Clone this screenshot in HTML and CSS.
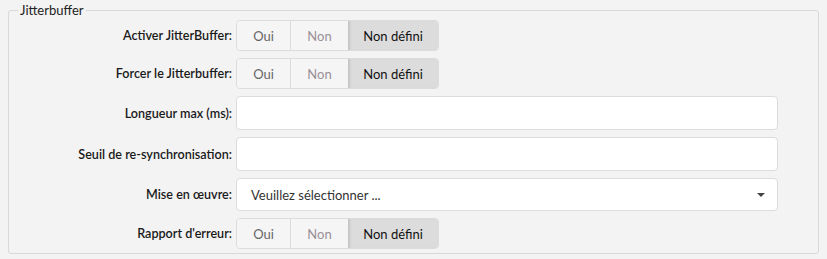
FILE: index.html
```html
<!DOCTYPE html>
<html lang="fr">
<head>
<meta charset="UTF-8" />
<title>Jitterbuffer</title>
<link rel="stylesheet" href="styles.css">
</head>
<body>
<fieldset class="group">
  <legend>Jitterbuffer</legend>

  <div class="form-grid">
    <label class="lbl">Activer JitterBuffer:</label>
    <div class="btn-group">
      <button class="opt opt-yes">Oui</button>
      <button class="opt opt-no">Non</button>
      <button class="opt opt-undef active">Non défini</button>
    </div>

    <label class="lbl">Forcer le Jitterbuffer:</label>
    <div class="btn-group">
      <button class="opt opt-yes">Oui</button>
      <button class="opt opt-no">Non</button>
      <button class="opt opt-undef active">Non défini</button>
    </div>

    <label class="lbl" for="maxlen">Longueur max (ms):</label>
    <input id="maxlen" class="field" type="text">

    <label class="lbl" for="resync">Seuil de re-synchronisation:</label>
    <input id="resync" class="field" type="text">

    <label class="lbl">Mise en œuvre:</label>
    <div class="field select">
      <span>Veuillez sélectionner ...</span>
      <span class="caret"></span>
    </div>

    <label class="lbl">Rapport d'erreur:</label>
    <div class="btn-group">
      <button class="opt opt-yes">Oui</button>
      <button class="opt opt-no">Non</button>
      <button class="opt opt-undef active">Non défini</button>
    </div>
  </div>
</fieldset>
</body>
</html>
```

FILE: styles.css
```css
body{margin:0;background:#f3f3f3;font-family:Lato,"Open Sans",sans-serif;font-size:13px;color:#222}
.group{margin:3px 0 0 8px;width:811px;box-sizing:border-box;border:1px solid #d8d8d8;border-radius:3px;padding:0 40px 4px 0}
.group legend{margin-left:9px;padding:0 2px 0 2px;font-size:13px;color:#222;line-height:14px}
.form-grid{display:grid;grid-template-columns:223px 1fr;column-gap:4px;row-gap:7px;align-items:center;margin-top:3px}
.lbl{text-align:right;font-weight:600;font-size:12.6px;color:#1a1a1a;white-space:nowrap}
.btn-group{display:flex;width:203px;height:31px;box-sizing:border-box;border:1px solid #dcdcdc;border-radius:4px;overflow:hidden;background:#f5f5f5}
.opt{font-family:inherit;font-size:13px;border:none;background:#f5f5f5;padding:0;cursor:pointer}
.opt-yes{width:54px;color:#666;border-right:1px solid #dcdcdc}
.opt-no{width:57px;color:#9a8f96}
.opt-undef{flex:1;color:#111}
.opt.active{background:#dcdcdc;box-shadow:inset 3px 0 2px -1px #c4c4c4}
.field{height:34px;box-sizing:border-box;border:1px solid #dcdcdc;border-radius:4px;background:#fff;font-family:inherit;font-size:13px;padding:0 14px}
.select{display:flex;align-items:center;justify-content:space-between;height:33px;color:#333}
.caret{width:0;height:0;border-left:4px solid transparent;border-right:4px solid transparent;border-top:4px solid #444;margin-right:-2px}
```
